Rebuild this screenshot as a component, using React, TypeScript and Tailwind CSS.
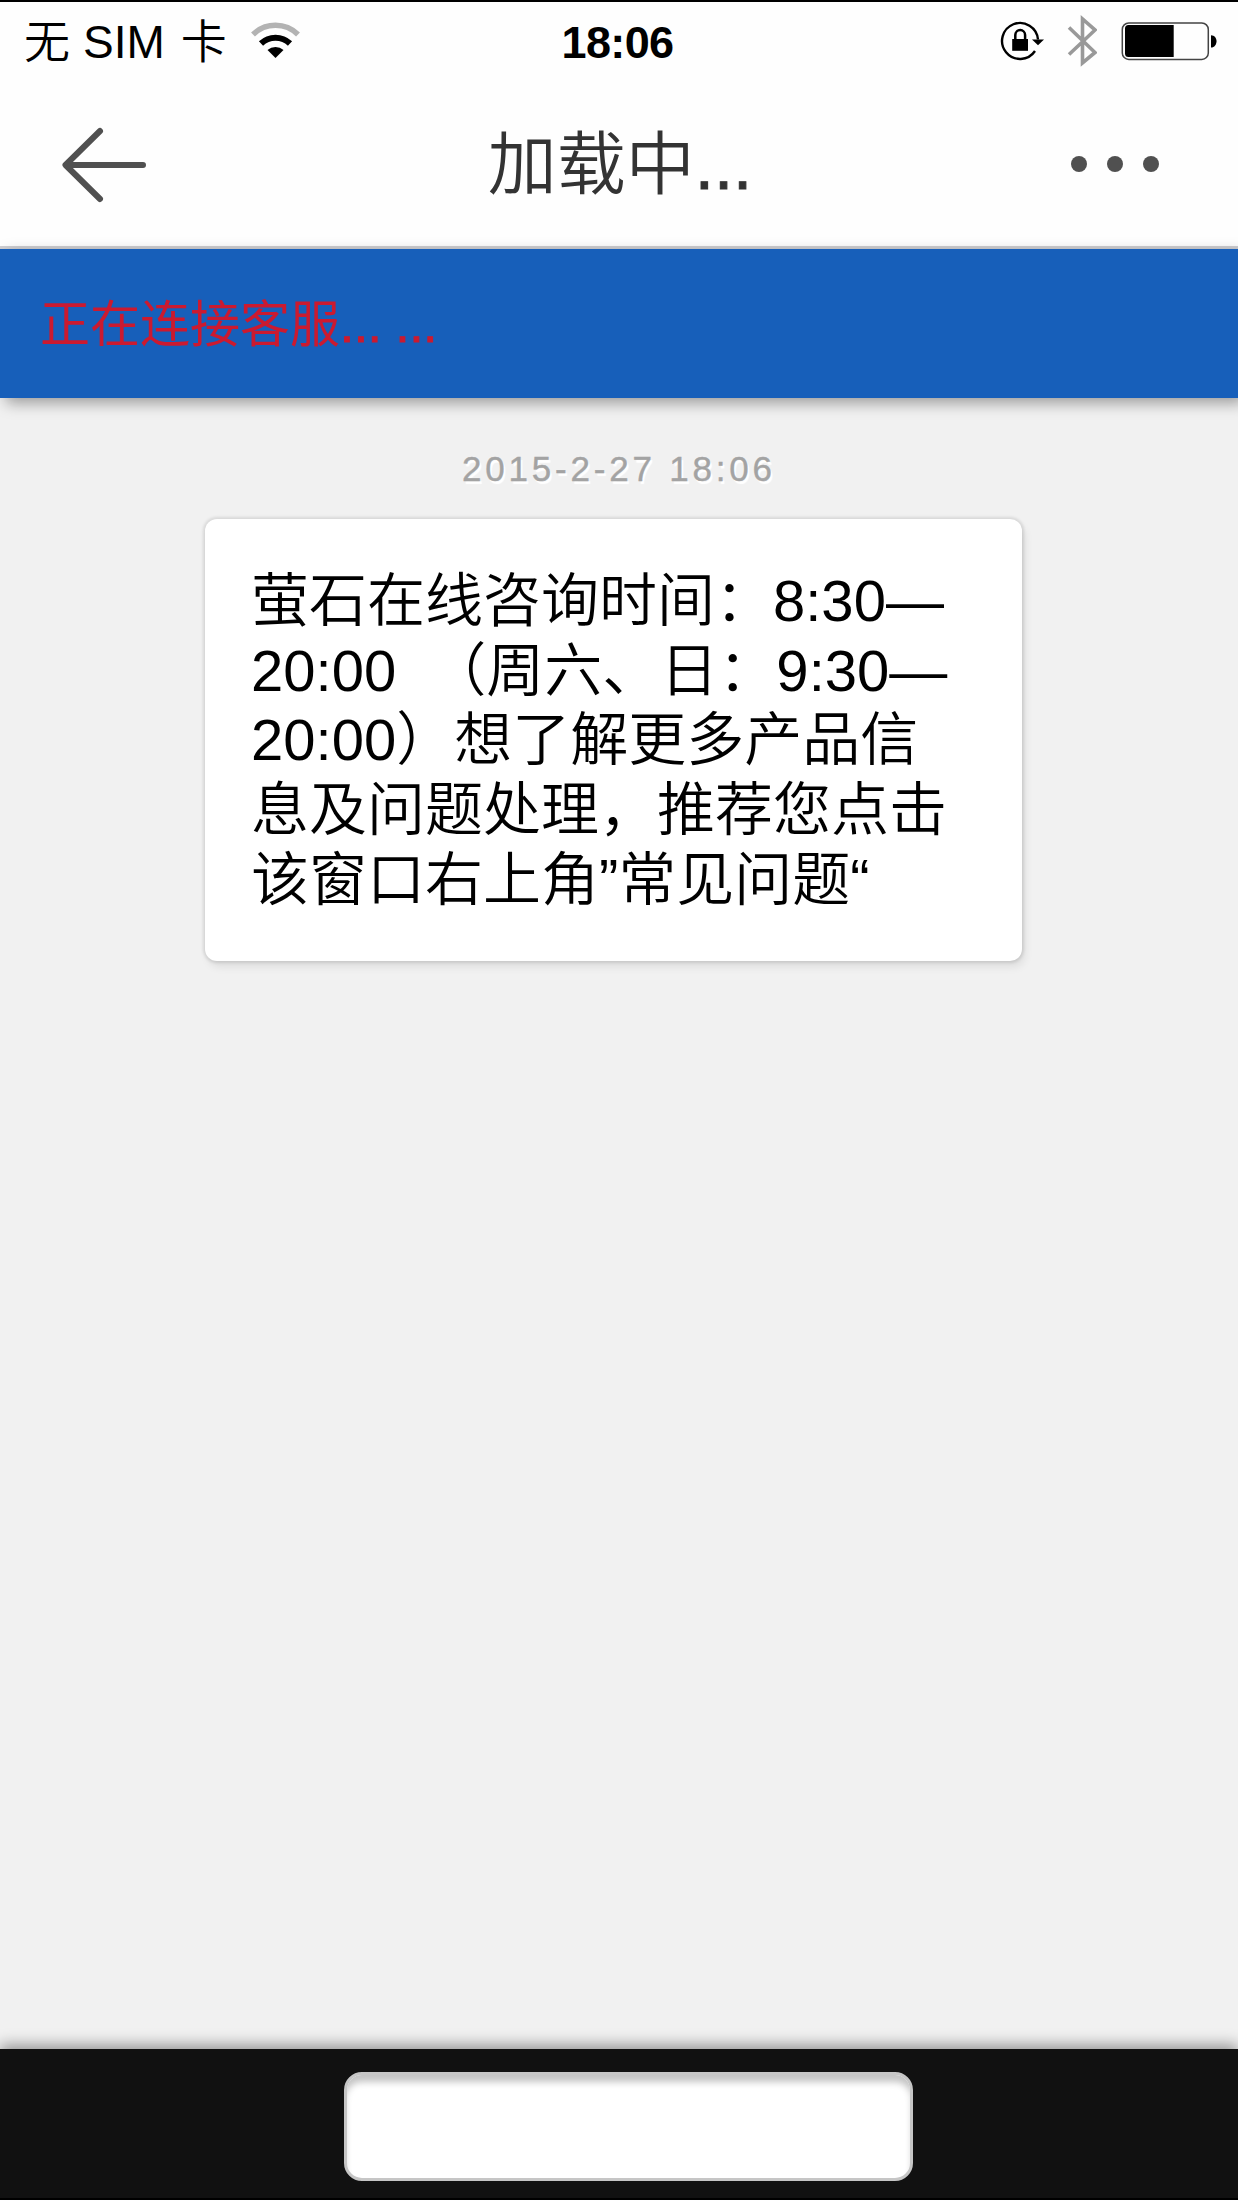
import { useState } from 'react'

const MESSAGE_LINES = [
  '萤石在线咨询时间：8:30—',
  '20:00  （周六、日：9:30—',
  '20:00）想了解更多产品信',
  '息及问题处理，推荐您点击',
  '该窗口右上角”常见问题“',
]

function WifiIcon() {
  return (
    <svg className="ml-[23px] h-[38px] w-[50px] shrink-0" viewBox="0 0 50 38" fill="none">
      <path d="M3 12.5a32 32 0 0 1 45 0" stroke="#b3b3b3" strokeWidth="5.5" />
      <path d="M11 21.500a21 21 0 0 1 29 0" stroke="#000" strokeWidth="6" />
      <path d="M17.5 28a12 12 0 0 1 16 0L25.5 36z" fill="#000" />
    </svg>
  )
}

function RotationLockIcon() {
  return (
    <svg className="h-[42px] w-[44px]" viewBox="0 0 44 42" fill="none">
      <path d="M38 19.5A18 18 0 1 0 35 31" stroke="#000" strokeWidth="2.4" />
      <path d="M32 19.5h12l-6 5.8z" fill="#000" />
      <rect x="12.2" y="19" width="15.8" height="11.8" fill="#000" />
      <path d="M15.3 20v-5a4.9 4.9 0 0 1 9.8 0v5" stroke="#000" strokeWidth="2.5" />
    </svg>
  )
}

function BluetoothIcon() {
  return (
    <svg className="ml-[23px] h-[54px] w-[30px]" viewBox="0 0 30 54" fill="none">
      <path d="M2 13.5l26 25L15.5 49V5L28 16 2 40.5" stroke="#999" strokeWidth="3.6" />
    </svg>
  )
}

function BatteryIcon() {
  return (
    <svg className="ml-[24px] h-[40px] w-[96px]" viewBox="0 0 96 40" fill="none">
      <rect x="1.3" y="2" width="86" height="36.4" rx="6.5" stroke="#444" strokeWidth="1.5" />
      <path d="M52.7 4v32H7.500a3.5 3.5 0 0 1-3.5-3.5v-25A3.5 3.5 0 0 1 7.5 4z" fill="#000" />
      <path d="M90 14.2c3.500 0 5.5 2.8 5.5 6s-2 6.3-5.5 6.3z" fill="#000" />
    </svg>
  )
}

function StatusBar() {
  return (
    <div className="flex h-[80px] items-center border-t-2 border-black pr-[21px] pl-[24px] text-black">
      <div className="flex flex-1 items-center">
        <span className="mt-[2px] flex text-[46px] leading-[78px] font-[350]">
          无<span className="mr-[16px] ml-[13px] font-normal">SIM</span>卡
        </span>
        <WifiIcon />
      </div>
      <span className="mt-[4px] mr-[6px] text-[45px] leading-[78px] font-bold tracking-[-0.6px]">18:06</span>
      <div className="flex flex-1 items-center justify-end">
        <RotationLockIcon />
        <BluetoothIcon />
        <BatteryIcon />
      </div>
    </div>
  )
}

function NavBar() {
  return (
    <div className="flex h-[169px] items-start justify-between border-b-3 border-[#cfcfd3] pr-[79px] pl-[60px] text-[#333]">
      <button className="mt-[45px]">
        <svg className="h-[80px] w-[90px]" viewBox="0 0 90 80" fill="none">
          <path
            d="M40 6L5.5 40 40 74M6 40h77"
            stroke="#505050"
            strokeWidth="6"
            strokeLinecap="round"
            strokeLinejoin="round"
          />
        </svg>
      </button>
      <h1 className="mt-[36px] ml-[19px] text-[69px] leading-[100px] font-[350]">
        加载中<span className="font-normal [-webkit-text-stroke:1px]">...</span>
      </h1>
      <button className="mt-[76px] flex gap-5">
        <span className="size-4 rounded-full bg-[#505050]" />
        <span className="size-4 rounded-full bg-[#505050]" />
        <span className="size-4 rounded-full bg-[#505050]" />
      </button>
    </div>
  )
}

export default function App() {
  const [text, setText] = useState('')

  return (
    <div className="flex h-[2200px] w-[1238px] flex-col overflow-hidden bg-[#f1f1f1] font-['Liberation_Sans','Noto_Sans_CJK_SC',sans-serif]">
      <header className="bg-[#fefefe]">
        <StatusBar />
        <NavBar />
      </header>

      <div className="flex h-[149px] shrink-0 items-center bg-[#175fba] pt-[4px] pl-[40px] text-[50px] text-[#cb1a30] shadow-[6px_5px_14px_rgba(0,0,0,0.36)]">
        <span className="leading-[145px]">
          正在连接客服<span className="[-webkit-text-stroke:1px]">... ...</span>
        </span>
      </div>

      <main className="flex flex-1 flex-col">
        <p className="mt-[51px] ml-[462px] text-[35px] leading-[40px] tracking-[3.8px] text-[#a3a3a3] [text-shadow:2px_3px_1px_#fff] [-webkit-text-stroke:0.4px]">
          2015-2-27 18:06
        </p>
        <div className="mt-[30px] ml-[205px] h-[442px] w-[817px] rounded-xl bg-white pt-[47px] pl-[46px] shadow-[0_0_3px_2px_rgba(0,0,0,0.1),3px_6px_9px_rgba(0,0,0,0.08)]">
          {MESSAGE_LINES.map((line) => (
            <p key={line} className="h-[69.7px] text-[58px] leading-[69.7px] font-[350] whitespace-pre text-black">
              {line}
            </p>
          ))}
        </div>
      </main>

      <footer className="h-[151px] shrink-0 border-b-2 border-black bg-[#111] pt-[23px] pl-[344px] shadow-[0_-4px_14px_rgba(0,0,0,0.4)]">
        <input
          className="block h-[109px] w-[569px] rounded-[18px] border-3 border-[#c6c6c6] bg-white px-4 text-5xl shadow-[inset_0_9px_7px_-2px_#c4c4c4] outline-none"
          value={text}
          onChange={(e) => setText(e.target.value)}
        />
      </footer>
    </div>
  )
}
